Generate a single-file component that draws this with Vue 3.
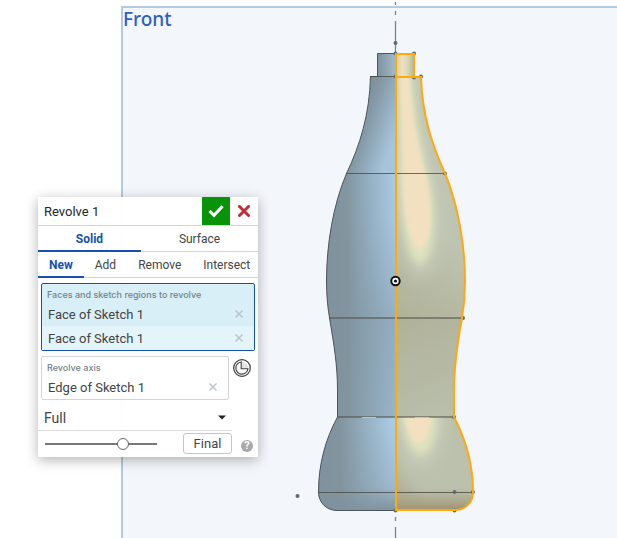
<script setup>
import { ref } from 'vue'

const bodyType = ref('Solid')
const operation = ref('New')
const faces = ref(['Face of Sketch 1', 'Face of Sketch 1'])
const axis = ref('Edge of Sketch 1')
const extent = ref('Full')
const opacity = ref(72)

const half =
  'M396 53.5H377.5V76.5H370.5C369.5 115 360 145 346.5 173.5C333 205 326.5 245 326.5 281C326.5 294 327.5 306 329.5 318C334 345 337.5 365 337.5 390V417C325 440 318.5 465 318.5 492C318.5 503 327 510.5 337 510.5H396'
const rightHalf =
  'M396 54H414V77H421C422 115 432 145 445 173.5C458 205 465 245 465 281C465 294 464 306 462 318C457 345 454 365 454 390V417C466 440 473 465 473 492C473 503 465 510 455 510H396Z'
const points = [
  [395.5, 43], [395.5, 53.5], [414, 53.5], [395.5, 76.5], [414, 77.5], [421, 76.5], [445, 173.5],
  [463, 318], [454, 417], [454.5, 492], [473, 492], [395.5, 510.5], [454.5, 510.5], [297.5, 496],
]
</script>

<template>
  <main class="viewport">
    <div class="plane"><span class="plane-name">Front</span></div>

    <svg class="model" width="617" height="538" viewBox="0 0 617 538" role="img" aria-label="Revolved bottle">
      <defs>
        <linearGradient id="neck" gradientUnits="userSpaceOnUse" x1="377" y1="0" x2="396" y2="0">
          <stop offset="0" stop-color="#7d909c" /><stop offset="1" stop-color="#a0bccd" />
        </linearGradient>
        <linearGradient id="shoulder" gradientUnits="userSpaceOnUse" x1="362" y1="118" x2="397" y2="130">
          <stop offset="0" stop-color="#7f929e" /><stop offset="0.25" stop-color="#879dab" /><stop offset="1" stop-color="#a6c5da" />
        </linearGradient>
        <linearGradient id="belly" gradientUnits="userSpaceOnUse" x1="327" y1="0" x2="396" y2="0">
          <stop offset="0" stop-color="#7f919d" /><stop offset="0.3" stop-color="#83969f" />
          <stop offset="0.42" stop-color="#8aa1b0" /><stop offset="1" stop-color="#a9cce5" />
        </linearGradient>
        <linearGradient id="base" gradientUnits="userSpaceOnUse" x1="319" y1="0" x2="396" y2="0">
          <stop offset="0" stop-color="#7f919d" /><stop offset="0.28" stop-color="#82959f" />
          <stop offset="0.65" stop-color="#98b3c5" /><stop offset="1" stop-color="#accfe7" />
        </linearGradient>
        <linearGradient id="fadeBelly" gradientUnits="userSpaceOnUse" x1="0" y1="173" x2="0" y2="330">
          <stop offset="0" stop-color="#7f919d" stop-opacity="0" /><stop offset="0.3" stop-color="#7f919d" stop-opacity="0.05" />
          <stop offset="1" stop-color="#7f919d" stop-opacity="0.5" />
        </linearGradient>
        <linearGradient id="fadeWaist" gradientUnits="userSpaceOnUse" x1="0" y1="318" x2="0" y2="417">
          <stop offset="0" stop-color="#7f919d" stop-opacity="0.5" /><stop offset="1" stop-color="#7f919d" stop-opacity="0.38" />
        </linearGradient>
        <linearGradient id="fadeBase" gradientUnits="userSpaceOnUse" x1="0" y1="417" x2="0" y2="510">
          <stop offset="0.1" stop-color="#7f919d" stop-opacity="0" /><stop offset="0.75" stop-color="#7f919d" stop-opacity="0.3" />
          <stop offset="1" stop-color="#7f919d" stop-opacity="0.95" />
        </linearGradient>
        <linearGradient id="olive" gradientUnits="userSpaceOnUse" x1="396" y1="320" x2="450" y2="240">
          <stop offset="0" stop-color="#b0b198" /><stop offset="1" stop-color="#bec4b2" />
        </linearGradient>
        <linearGradient id="oliveWaist" gradientUnits="userSpaceOnUse" x1="396" y1="318" x2="440" y2="417">
          <stop offset="0" stop-color="#b0b199" /><stop offset="1" stop-color="#b9bfac" />
        </linearGradient>
        <linearGradient id="neckGlow" gradientUnits="userSpaceOnUse" x1="396" y1="0" x2="414" y2="0">
          <stop offset="0" stop-color="#d3ceb0" /><stop offset="0.35" stop-color="#f1e0bf" />
          <stop offset="0.6" stop-color="#dcdcb8" /><stop offset="1" stop-color="#b5b89e" />
        </linearGradient>
        <linearGradient id="footShade" gradientUnits="userSpaceOnUse" x1="0" y1="488" x2="0" y2="510">
          <stop offset="0" stop-color="#a39b7c" stop-opacity="0" /><stop offset="1" stop-color="#a09371" />
        </linearGradient>
        <filter id="soft2" x="-80%" y="-30%" width="260%" height="160%"><feGaussianBlur stdDeviation="1.8" /></filter>
        <filter id="soft3" x="-80%" y="-30%" width="260%" height="160%"><feGaussianBlur stdDeviation="3.5" /></filter>
        <filter id="soft8" x="-80%" y="-50%" width="260%" height="200%"><feGaussianBlur stdDeviation="8" /></filter>
        <clipPath id="leftClip"><path :d="half + 'Z'" /></clipPath>
        <clipPath id="rightClip"><path :d="rightHalf" /></clipPath>
        <clipPath id="upperClip"><path d="M396 77H480V318H396Z" /></clipPath>
        <clipPath id="lowerClip"><path d="M396 417H480V511H396Z" /></clipPath>
      </defs>

      <path class="axis" d="M395.5 2V5M395.5 11V15M395.5 21V54M395.5 517V521M395.5 527V538" />

      <g clip-path="url(#leftClip)">
        <rect x="377" y="53" width="19" height="24" fill="url(#neck)" />
        <rect x="326" y="76" width="70" height="98" fill="url(#shoulder)" />
        <rect x="326" y="173" width="70" height="145" fill="url(#belly)" />
        <rect x="326" y="173" width="70" height="145" fill="url(#fadeBelly)" />
        <rect x="326" y="318" width="70" height="99" fill="url(#belly)" />
        <rect x="326" y="318" width="70" height="99" fill="url(#fadeWaist)" />
        <rect x="318" y="417" width="78" height="94" fill="url(#base)" />
        <rect x="318" y="417" width="78" height="94" fill="url(#fadeBase)" />
      </g>

      <g clip-path="url(#rightClip)">
        <rect x="396" y="53" width="80" height="265" fill="url(#olive)" />
        <rect x="396" y="318" width="80" height="99" fill="url(#oliveWaist)" />
        <rect x="396" y="417" width="80" height="94" fill="#bbc1ad" />
        <rect x="396" y="53" width="18" height="24" fill="url(#neckGlow)" />
        <g clip-path="url(#upperClip)">
          <path d="M398 70H413C415 110 425 145 434 185C442 225 436 276 420 276C405 276 400 220 398 170Z" fill="#ccd0bb" filter="url(#soft8)" />
          <path d="M398 60H411C413 110 420 145 430 182C438 222 432 263 420 263C407 263 401 215 399 173Z" fill="#dee2bc" filter="url(#soft3)" />
          <path d="M400 60H409C410 110 417 145 426 176C434 212 431 249 420 249C409 249 403 210 403 173C404 140 400 100 400 60Z" fill="#f2e0c0" filter="url(#soft2)" />
        </g>
        <g clip-path="url(#lowerClip)">
          <path d="M396 400H444C444 440 434 466 421 466C409 466 400 445 396 400Z" fill="#ccd0bb" filter="url(#soft8)" />
          <path d="M400 400H437C438 432 432 454 421 454C410 454 401 430 400 400Z" fill="#dee2bc" filter="url(#soft3)" />
          <path d="M403 400H431C432 427 427 443 419 443C411 443 404 425 403 400Z" fill="#f2e0c0" filter="url(#soft2)" />
          <path d="M380 450Q396 480 420 500H380Z" fill="#b0ad91" filter="url(#soft8)" />
        </g>
        <rect x="396" y="488" width="80" height="23" fill="url(#footShade)" />
      </g>

      <path class="outline" :d="half" />
      <path class="seam" d="M370 76.5H396M346 173.5H445M319 492.5H473" />
      <path class="seam faint" d="M329 318H463M337 417H454" />
      <path class="dash" d="M362 417.5H376M415 417.5H429" />
      <circle v-for="(p, i) in points" :key="i" class="vertex" :cx="p[0]" :cy="p[1]" r="2" />
      <path class="selected" :d="rightHalf + 'M396 77H421'" />
      <circle cx="395.5" cy="281" r="4.2" fill="#fff" stroke="#111" stroke-width="2" />
      <circle cx="395.5" cy="281" r="1.6" fill="#111" />
    </svg>

    <form class="dialog" aria-label="Revolve" @submit.prevent>
      <header class="title-bar">
        <h1>Revolve 1</h1>
        <button class="accept" type="submit" aria-label="Accept">
          <svg width="16" height="14" viewBox="0 0 16 14"><path d="M1.5 7L6 11.3L14.5 2.3" fill="none" stroke="#fff" stroke-width="3" /></svg>
        </button>
        <button class="cancel" type="button" aria-label="Cancel">
          <svg width="12" height="12" viewBox="0 0 12 12"><path d="M1.5 1.5L10.5 10.5M10.5 1.5L1.5 10.5" stroke="#c12d36" stroke-width="3" stroke-linecap="round" /></svg>
        </button>
      </header>

      <nav class="tabs types">
        <button v-for="t in ['Solid', 'Surface']" :key="t" type="button" :class="{ active: bodyType === t }" @click="bodyType = t">{{ t }}</button>
      </nav>
      <nav class="tabs operations">
        <button v-for="t in ['New', 'Add', 'Remove', 'Intersect']" :key="t" type="button" :class="{ active: operation === t }" @click="operation = t">{{ t }}</button>
      </nav>

      <section class="field faces">
        <h2>Faces and sketch regions to revolve</h2>
        <ul>
          <li v-for="(f, i) in faces" :key="i">
            <span>{{ f }}</span>
            <button class="clear" type="button" aria-label="Remove face" @click="faces.splice(i, 1)">
              <svg width="8" height="8" viewBox="0 0 8 8"><path d="M0.5 0.5L7.5 7.5M7.5 0.5L0.5 7.5" /></svg>
            </button>
          </li>
        </ul>
      </section>

      <div class="axis-row">
        <section class="field">
          <h2>Revolve axis</h2>
          <div class="item">
            <span>{{ axis }}</span>
            <button class="clear" type="button" aria-label="Remove axis">
              <svg width="8" height="8" viewBox="0 0 8 8"><path d="M0.5 0.5L7.5 7.5M7.5 0.5L0.5 7.5" /></svg>
            </button>
          </div>
        </section>
        <button class="direction" type="button" aria-label="Opposite direction">
          <svg width="18" height="18" viewBox="0 0 18 18" fill="none" stroke="#3c3c3c">
            <path d="M9 3V9H15A6 6 0 0 0 9 3Z" fill="#e3e3e3" stroke="none" />
            <circle cx="9" cy="9" r="8.3" stroke-width="1.2" />
            <path d="M8.2 3A6.1 6.1 0 1 0 15 9.8H8.2Z" stroke-width="1.1" />
          </svg>
        </button>
      </div>

      <div class="extent">
        <select v-model="extent" aria-label="Revolve type"><option>Full</option><option>One direction</option></select>
        <svg width="8" height="5" viewBox="0 0 8 5"><path d="M0 0.5H8L4 4.5Z" fill="#222" /></svg>
      </div>

      <footer>
        <input v-model="opacity" type="range" min="0" max="100" aria-label="Preview opacity" />
        <button class="final" type="button">Final</button>
        <button class="help" type="button" aria-label="Help">?</button>
      </footer>
    </form>
  </main>
</template>

<style>
body { margin: 0; background: #fff; }
</style>

<style scoped>
* { box-sizing: border-box; }
.viewport {
  position: relative;
  display: flex;
  min-height: 100vh;
  overflow: hidden;
  font-family: Roboto, "Liberation Sans", sans-serif;
  font-size: 13px;
  color: #444;
}
.plane {
  flex: 1;
  margin: 6px 0 0 121px;
  border: 2px solid #b0cbe2;
  border-width: 2px 0 0 2px;
  background: #f3f7fb;
}
.plane-name {
  display: block;
  font: 500 19px/22px "Noto Sans", sans-serif;
  color: #2e60c0;
}
.model { position: absolute; left: 0; top: 0; }
.axis { stroke: #7a858b; stroke-width: 1.3; }
.outline { fill: none; stroke: #4c555a; stroke-width: 1; }
.seam { stroke: #4c4a44; stroke-opacity: 0.8; stroke-width: 1; }
.faint { stroke-opacity: 0.5; stroke-width: 2; }
.dash { stroke: #c4c4bc; stroke-width: 1; }
.vertex { fill: #5f6a6e; }
.selected { fill: none; stroke: #ffa90c; stroke-width: 2; }

.dialog {
  position: absolute;
  left: 38px;
  top: 197px;
  width: 220px;
  background: rgba(255, 255, 255, 0.98);
  box-shadow: 0 3px 12px rgba(0, 0, 0, 0.3);
}
button {
  margin: 0;
  padding: 0;
  border: 0;
  background: none;
  font: inherit;
  color: inherit;
  cursor: pointer;
}
h1, h2, ul { margin: 0; padding: 0; font-weight: 400; }
.title-bar {
  display: flex;
  height: 29px;
  border-bottom: 1px solid #d4d4d4;
}
h1 { flex: 1; padding-left: 6px; font-size: 13px; line-height: 29px; color: #262626; }
.title-bar button { display: grid; place-items: center; width: 28px; }
.accept { background: #089308; }
.tabs { display: flex; height: 26px; border-bottom: 1px solid #d4d4d4; font-size: 12px; }
.tabs button { height: 26px; padding-top: 1px; border-bottom: 2px solid transparent; }
.tabs .active { border-color: #1651b0; color: #1651b0; font-weight: 700; }
.types button { flex: 1; }
.types button:first-child { flex: 0 0 103px; }
.operations button { padding: 1px 11px 0; }
.operations { justify-content: space-between; }
.field { border: 1px solid #d3d5d6; border-radius: 2px; background: #fff; }
h2 {
  padding: 4px 5px 0;
  font: 500 9px/14px Inter, sans-serif;
  color: #74818a;
}
.faces { margin: 5px 3px 0; border-color: #1651b0; background: #d9eff8; }
ul { list-style: none; }
li, .item {
  display: flex;
  align-items: center;
  justify-content: space-between;
  height: 24px;
  padding: 0 11px 0 6px;
}
li + li { background: #e3f4fb; }
.clear { display: grid; place-items: center; }
.clear path { fill: none; stroke: #b6c0c5; stroke-width: 1.3; }
.axis-row { display: flex; align-items: flex-start; gap: 4px; padding: 5px 7px 0 3px; }
.axis-row .field { flex: 1; }
.axis-row .direction { display: grid; margin-top: 3px; }
.extent {
  display: flex;
  align-items: center;
  width: 194px;
  height: 31px;
  padding: 5px 6px 0;
  border-bottom: 1px solid #dcdcdc;
}
select {
  flex: 1;
  margin: 0;
  padding: 0;
  border: 0;
  appearance: none;
  background: none;
  font: inherit;
  font-size: 14px;
  color: inherit;
}
footer { display: flex; align-items: center; padding: 2px 5px 3px 7px; }
input {
  width: 112px;
  height: 14px;
  margin: 0;
  appearance: none;
  background: linear-gradient(#777, #777) center / 100% 2px no-repeat;
}
input::-webkit-slider-thumb {
  appearance: none;
  width: 12px;
  height: 12px;
  border: 1px solid #666;
  border-radius: 50%;
  background: #fff;
}
.final {
  width: 49px;
  height: 21px;
  margin-left: 26px;
  border: 1px solid #c6c6c6;
  border-radius: 3px;
  background: #fff;
}
.help {
  width: 12px;
  height: 12px;
  margin: 4px 0 0 auto;
  border-radius: 50%;
  background: #a9a9a9;
  color: #fff;
  font-size: 11px;
  font-weight: 700;
  line-height: 12px;
}
</style>
